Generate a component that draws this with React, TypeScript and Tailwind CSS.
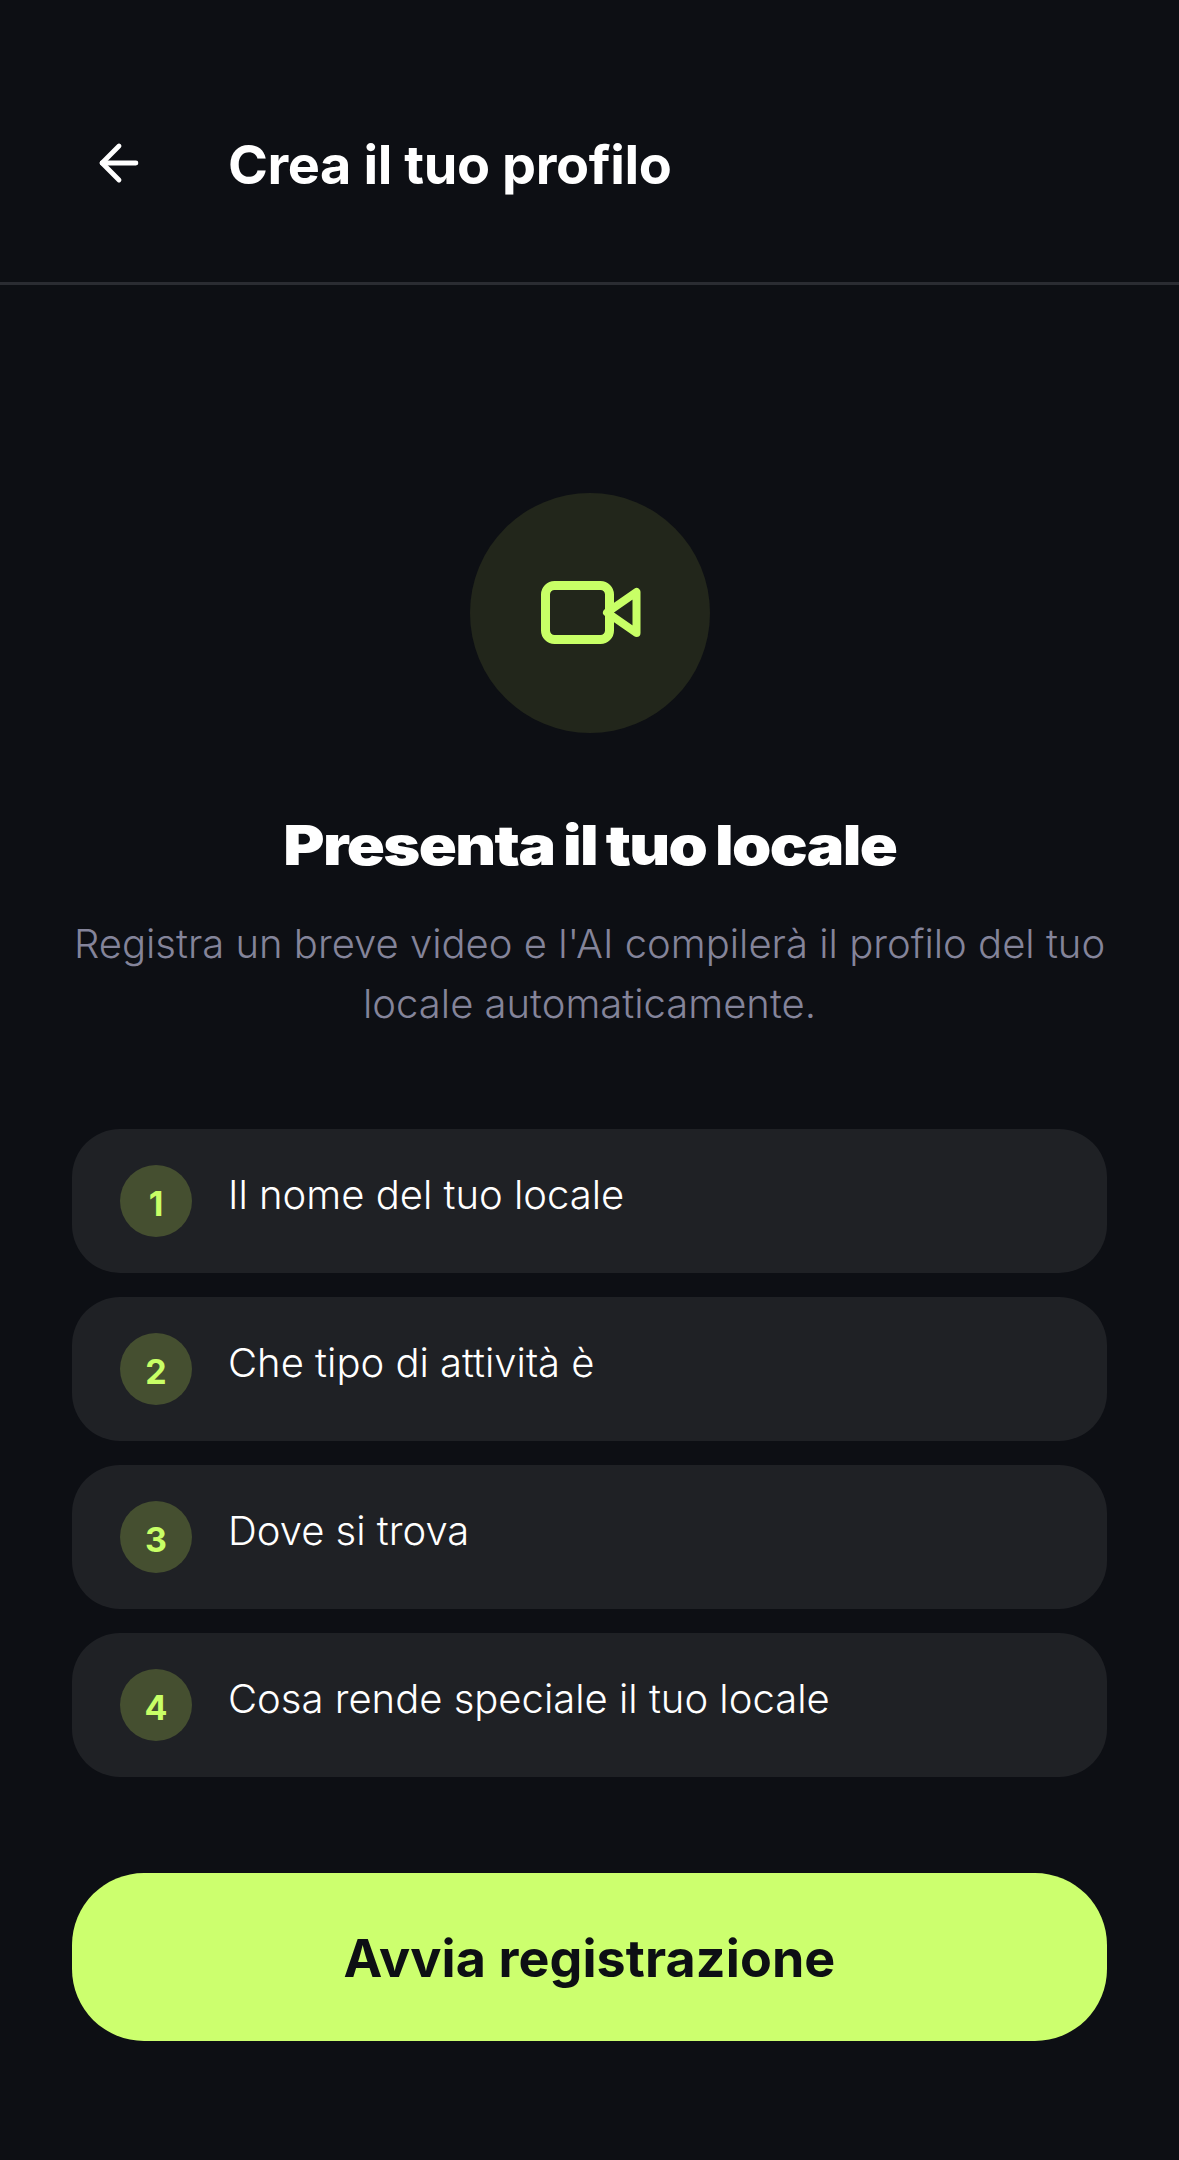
import { ArrowLeft } from "lucide-react";

const steps = [
  "Il nome del tuo locale",
  "Che tipo di attività è",
  "Dove si trova",
  "Cosa rende speciale il tuo locale",
];

function CameraIcon() {
  return (
    <svg width="100" height="64" viewBox="0 0 100 64" fill="none" stroke="#c8ff66" strokeWidth="9" strokeLinecap="round" strokeLinejoin="round" aria-hidden="true" className="ml-[2px]">
      <rect x="4.5" y="4.5" width="64" height="54" rx="9" />
      <path d="M66 31.5 L95.5 11 V52 Z" strokeWidth="8" />
    </svg>
  );
}

export default function App() {
  return (
    <div className="h-[2160px] w-[1179px] overflow-hidden bg-[#0d0f14] font-['Inter','Noto_Sans',sans-serif] text-white">
      <header className="flex h-[285px] items-start border-b-[3px] border-[#2a2c32] pl-[90px] pt-[134px]">
        <ArrowLeft size={58} strokeWidth={2} className="text-white" />
        <h1 className="ml-[80px] text-[54px] font-bold leading-[62px] tracking-[-0.4px]">Crea il tuo profilo</h1>
      </header>

      <main className="flex flex-col items-center px-[72px] pt-[208px]">
        <div className="flex size-[240px] items-center justify-center rounded-full bg-[#22261b]">
          <CameraIcon />
        </div>

        <h2 className="mt-[78px] scale-x-[1.145] text-[55px] font-black leading-[68px] tracking-[-1.4px] [word-spacing:-2px]">Presenta il tuo locale</h2>
        <p className="mt-[35px] text-center text-[40px] font-light leading-[60px] text-[#84849a]">
          Registra un breve video e l'AI compilerà il profilo del tuo locale automaticamente.
        </p>

        <ul className="mt-[95px] flex w-full flex-col gap-[24px]">
          {steps.map((step, i) => (
            <li key={step} className="flex h-[144px] items-start rounded-[48px] bg-[#1f2125] pl-[48px] pt-[36px]">
              <span className="flex size-[72px] items-center justify-center rounded-full bg-[#454f30] pt-[4px] text-[34px] font-bold text-[#c8ff66]">
                {i + 1}
              </span>
              <span className="ml-[36px] text-[40px] font-light leading-[60px] text-white">{step}</span>
            </li>
          ))}
        </ul>

        <button className="mt-[96px] h-[168px] w-full rounded-[72px] bg-[#ccff6e] pt-[3px] text-[52px] font-bold tracking-[0.1px] text-[#0d0f14]">
          Avvia registrazione
        </button>
      </main>
    </div>
  );
}
